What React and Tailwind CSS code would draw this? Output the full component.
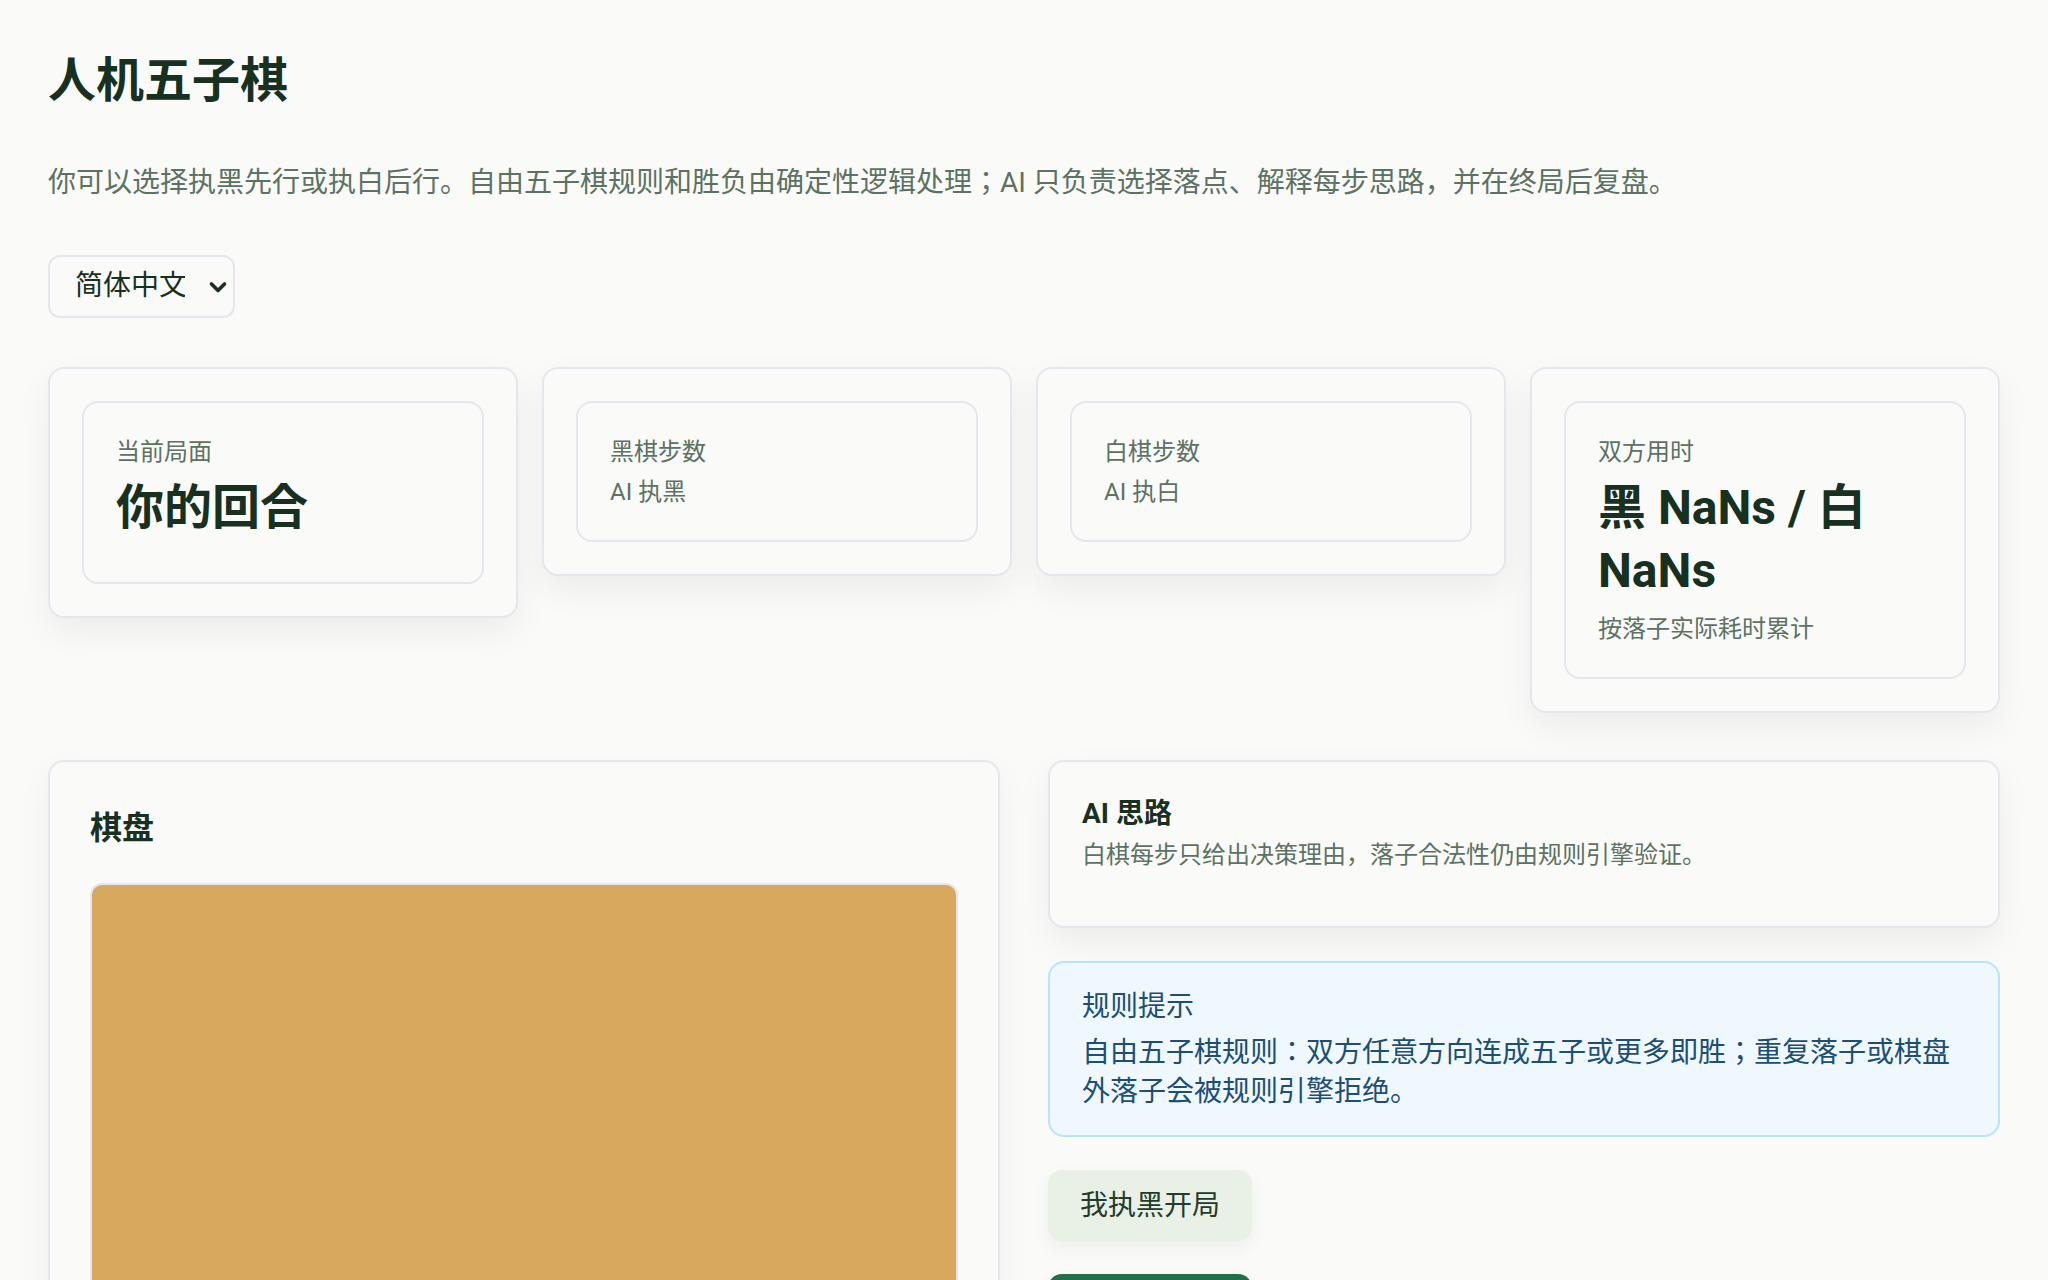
import { useState } from 'react';

const FONT = { fontFamily: 'Roboto, "Noto Sans CJK KR", "Noto Sans CJK SC", sans-serif' };

const STATS = [
  { key: 'turn',  label: '当前局面', value: '你的回合', sub: '' },
  { key: 'black', label: '黑棋步数', value: '',         sub: 'AI 执黑' },
  { key: 'white', label: '白棋步数', value: '',         sub: 'AI 执白' },
  { key: 'time',  label: '双方用时', value: '黑 NaNs / 白 NaNs', sub: '按落子实际耗时累计' },
];

function StatCard({ label, value, sub }) {
  return (
    <div className="rounded-2xl border-2 border-[#e6e6ec] bg-[#fafaf9] p-8 shadow-[0_14px_34px_rgba(20,30,25,0.06)]">
      <div className={`rounded-2xl border-2 border-[#e6e6ec] px-8 pt-[29px] ${value && !sub ? 'pb-[43px]' : 'pb-[28px]'}`}>
        <div className="text-[24px] leading-[40px] text-[#5c7262]">{label}</div>
        {value && <div className="mt-[4px] text-[48px] font-bold leading-[63px] text-[#17301f]">{value}</div>}
        {sub && <div className={`text-[24px] leading-[40px] text-[#5c7262] ${value ? 'mt-[7px]' : ''}`}>{sub}</div>}
      </div>
    </div>
  );
}

export default function App() {
  const [lang, setLang] = useState('zh');

  return (
    <div className="min-h-screen bg-[#fafaf8] px-12 pt-[52px] pb-12" style={FONT}>
      <h1 className="text-[48px] font-bold leading-[1.2] text-[#17301f]">人机五子棋</h1>
      <p className="mt-[52px] text-[28px] leading-[42px] text-[#5c7262]">
        你可以选择执黑先行或执白后行。自由五子棋规则和胜负由确定性逻辑处理；AI 只负责选择落点、解释每步思路，并在终局后复盘。
      </p>

      <div className="relative mt-[51px] inline-block">
        <select
          value={lang}
          onChange={e => setLang(e.target.value)}
          className="h-[63px] w-[187px] appearance-none rounded-xl border-2 border-[#e6e6ec] bg-[#fafaf9] pl-[25px] pr-12 text-[28px] text-[#17301f] outline-none"
          style={FONT}
        >
          <option value="zh">简体中文</option>
          <option value="en">English</option>
        </select>
        <svg viewBox="0 0 20 20" className="pointer-events-none absolute left-[160px] top-[22px] h-[20px] w-[20px]" fill="none">
          <path d="M3.5 7l6.5 6.5L16.5 7" stroke="#17301f" strokeWidth="3.6" strokeLinecap="round" strokeLinejoin="round"/>
        </svg>
      </div>

      {/* Stats */}
      <div className="mt-[49px] grid grid-cols-4 items-start gap-6">
        {STATS.map(s => <StatCard key={s.key} {...s}/>)}
      </div>

      {/* Main */}
      <div className="mt-[47px] grid grid-cols-2 items-start gap-12">
        <div className="rounded-2xl border-2 border-[#e6e6ec] bg-[#fafaf9] px-10 pt-[47px] pb-10 shadow-[0_14px_34px_rgba(20,30,25,0.05)]">
          <h2 className="text-[32px] font-bold leading-[38px] text-[#17301f]">棋盘</h2>
          <div className="mt-[36px] aspect-square w-full rounded-xl border-2 border-[#e6e6ec] bg-[#d8a85f]"/>
        </div>

        <div className="flex flex-col items-start gap-[33px]">
          <div className="w-full rounded-2xl border-2 border-[#e6e6ec] bg-[#fafaf9] px-8 pt-[35px] pb-[52px] shadow-[0_14px_34px_rgba(20,30,25,0.06)]">
            <h3 className="text-[28px] font-bold leading-[34px] text-[#17301f]">AI 思路</h3>
            <p className="mt-[5px] text-[24px] leading-[38px] text-[#5c7262]">白棋每步只给出决策理由，落子合法性仍由规则引擎验证。</p>
          </div>

          <div className="w-full rounded-2xl border-2 border-[#b9e3fb] bg-[#f0f8ff] px-8 pt-[24px] pb-[24px]">
            <div className="text-[28px] leading-[40px] text-[#1c4f73]">规则提示</div>
            <p className="mt-[6px] text-[28px] leading-[39px] text-[#1c4f73]">自由五子棋规则：双方任意方向连成五子或更多即胜；重复落子或棋盘外落子会被规则引擎拒绝。</p>
          </div>

          <button className="rounded-[14px] bg-[#e9f0e6] px-8 py-[14px] text-[28px] leading-[43px] text-[#243a2b] shadow-[0_8px_20px_rgba(20,30,25,0.05)]">
            我执黑开局
          </button>
          <button className="rounded-[14px] bg-[#22704b] px-8 py-[14px] text-[28px] leading-[43px] text-white shadow-[0_8px_20px_rgba(20,30,25,0.08)]">
            我执白开局
          </button>
        </div>
      </div>
    </div>
  );
}
